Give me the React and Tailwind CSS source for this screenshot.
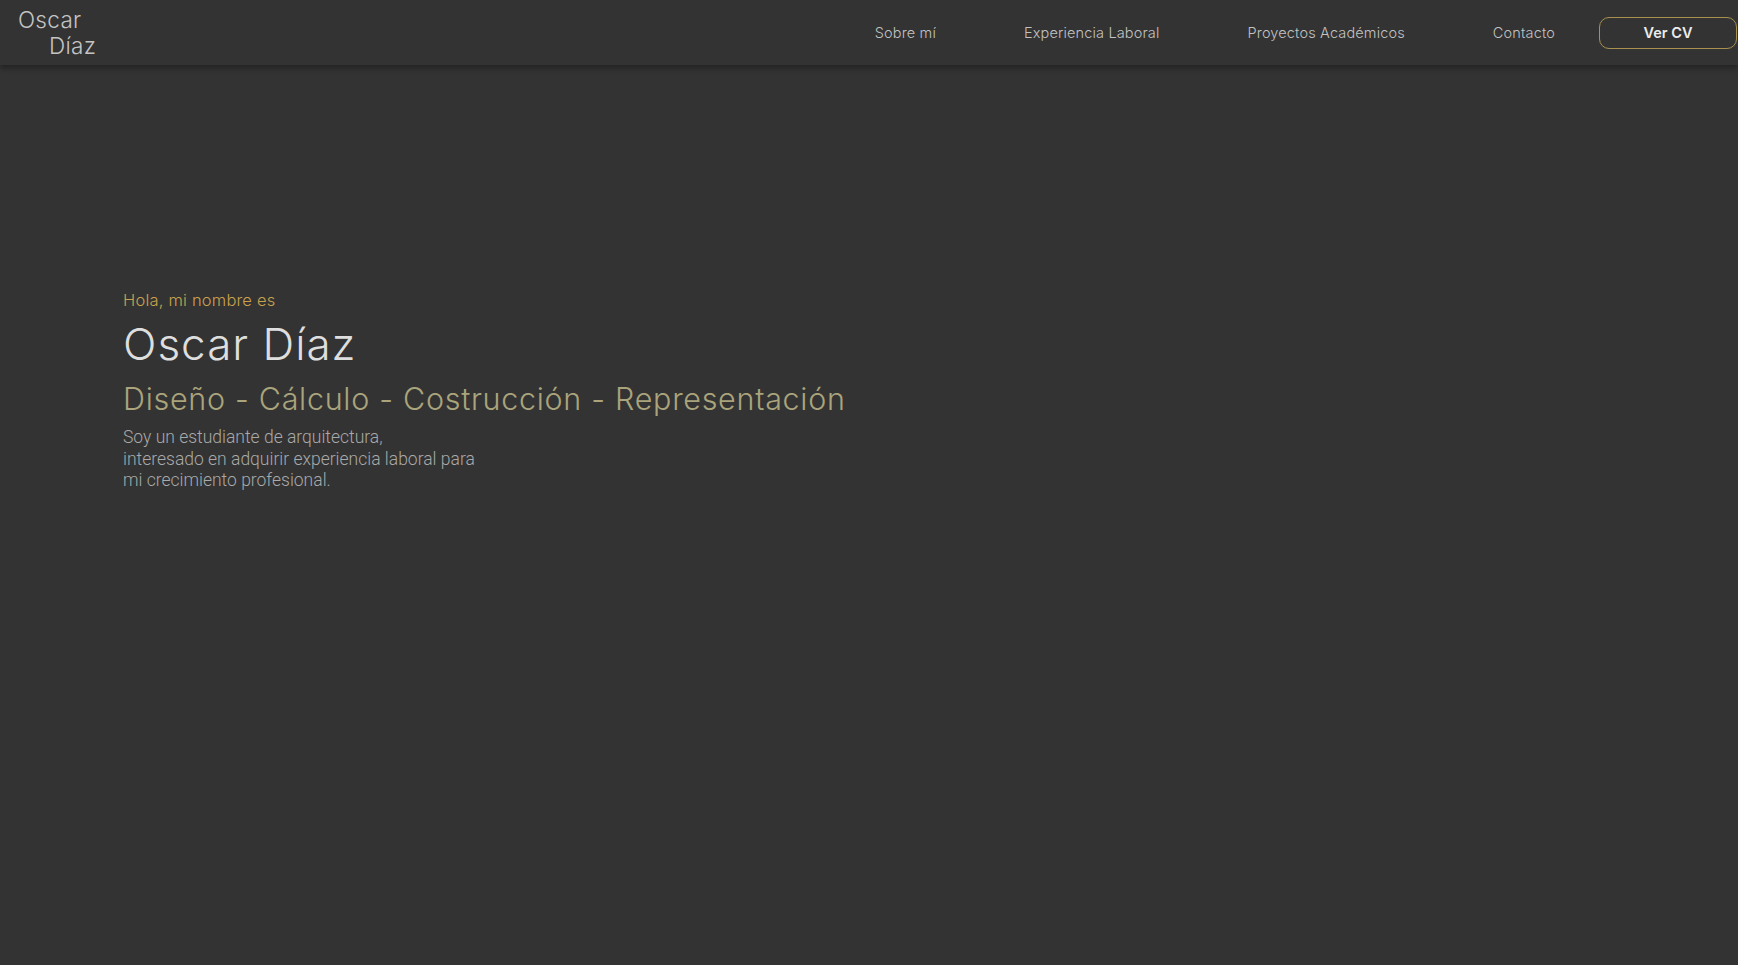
const NAV_LINKS = ['Sobre mí', 'Experiencia Laboral', 'Proyectos Académicos', 'Contacto'];

export default function App() {
  return (
    <div className="min-h-screen bg-[#333333] font-['Inter',sans-serif]">

      {/* Header */}
      <header className="h-[65px] flex items-center justify-between bg-[#333333] shadow-[0_3px_6px_rgba(0,0,0,0.35)] relative z-10">
        <a className="flex flex-col text-[22.5px] leading-[26px] text-[#c4c4c4] font-light pt-[1px] tracking-[0.3px]">
          <span className="pl-[18px]">Oscar</span>
          <span className="pl-[49px]">Díaz</span>
        </a>
        <nav className="flex items-center h-full">
          {NAV_LINKS.map((link) => (
            <a key={link} className="px-[44px] text-[14.5px] font-light text-[#c2c2c2] tracking-[0.15px]">
              {link}
            </a>
          ))}
          <button className="w-[138px] h-[32px] mr-[1px] rounded-[10px] border-[1.5px] border-[#a8904f] text-[14.5px] font-semibold text-[#ececec]">
            Ver CV
          </button>
        </nav>
      </header>

      {/* Hero */}
      <main className="pl-[123px] pt-[225px]">
        <p className="text-[16.5px] font-light text-[#c9a24e] leading-[20px] tracking-[0.2px]">Hola, mi nombre es</p>
        <h1 className="mt-[8px] text-[44px] font-light text-[#dedede] leading-[52px] tracking-[1px]">Oscar Díaz</h1>
        <h2 className="mt-[9px] text-[30.5px] font-light text-[#aaa47c] leading-[40px] tracking-[0.7px]">
          Diseño - Cálculo - Costrucción - Representación
        </h2>
        <p className="mt-[8px] font-['Roboto',sans-serif] font-light text-[17.5px] leading-[21.5px] text-[#a9a9a9]">
          Soy un estudiante de arquitectura,<br />
          interesado en adquirir experiencia laboral para<br />
          mi crecimiento profesional.
        </p>
      </main>
    </div>
  );
}
